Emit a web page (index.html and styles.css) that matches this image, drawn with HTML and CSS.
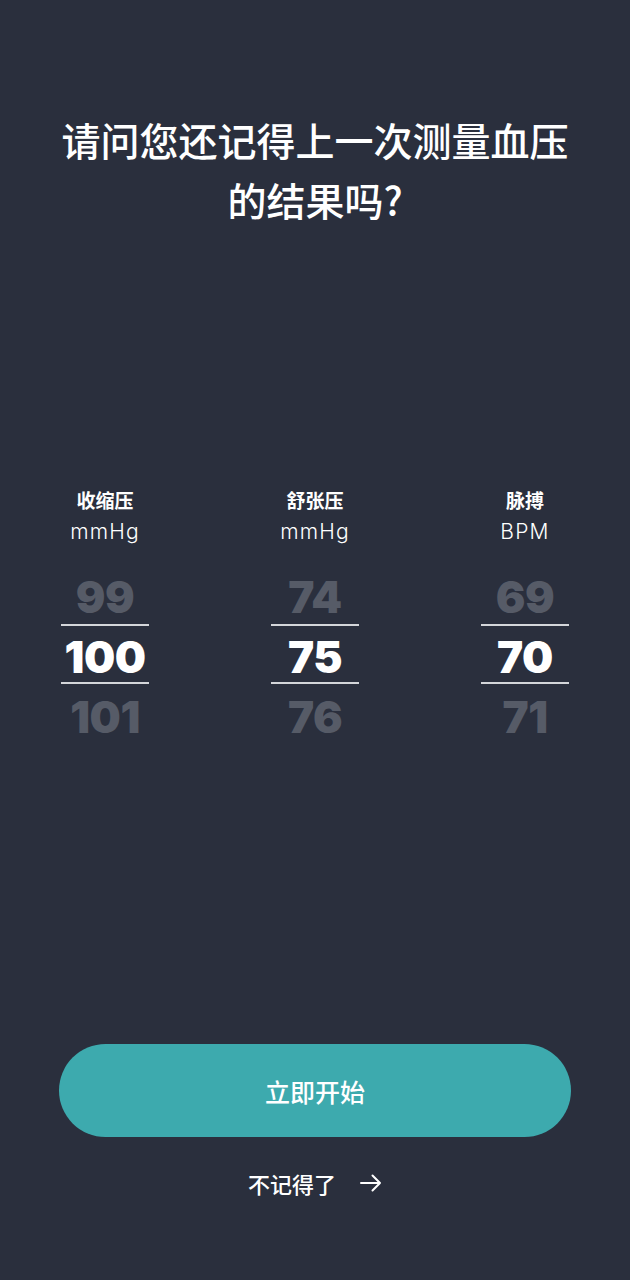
FILE: index.html
```html
<!DOCTYPE html>
<html lang="zh">

<head>
    <meta charset="UTF-8">
    <meta name="viewport" content="width=device-width, initial-scale=1.0">
    <title>血压记录</title>
    <link rel="stylesheet" href="styles.css">
</head>

<body class="main">
    <h1 class="title">请问您还记得上一次测量血压<br>的结果吗?</h1>

    <div class="pickers">
        <div class="column">
            <div class="label">收缩压</div>
            <div class="unit">mmHg</div>
            <div class="wheel">
                <div class="num dim">99</div>
                <div class="num active">100</div>
                <div class="num dim">101</div>
            </div>
        </div>
        <div class="column">
            <div class="label">舒张压</div>
            <div class="unit">mmHg</div>
            <div class="wheel">
                <div class="num dim">74</div>
                <div class="num active">75</div>
                <div class="num dim">76</div>
            </div>
        </div>
        <div class="column">
            <div class="label">脉搏</div>
            <div class="unit">BPM</div>
            <div class="wheel">
                <div class="num dim">69</div>
                <div class="num active">70</div>
                <div class="num dim">71</div>
            </div>
        </div>
    </div>

    <div class="actions">
        <button class="start-btn">立即开始</button>
        <a class="skip">不记得了
            <svg class="arrow" width="22" height="18" viewBox="0 0 22 18">
                <path d="M1 9 H20 M12.5 1.5 L20 9 L12.5 16.5" fill="none" stroke="#fff" stroke-width="2"
                    stroke-linecap="round" stroke-linejoin="round" />
            </svg>
        </a>
    </div>
</body>

</html>
```

FILE: styles.css
```css
html,
body {
    margin: 0;
    height: 100%;
}

.main {
    background-color: #2a2f3d;
    color: #fff;
    font-family: "Noto Sans CJK SC", "Noto Sans", sans-serif;
    display: flex;
    flex-direction: column;
    align-items: center;
}

.title {
    margin: 109px 0 0;
    font-size: 39px;
    line-height: 60px;
    font-weight: 500;
    text-align: center;
}

/* three pickers side by side */
.pickers {
    margin-top: 257px;
    width: 100%;
    display: grid;
    grid-template-columns: repeat(3, 1fr);
}

.column {
    display: flex;
    flex-direction: column;
    align-items: center;
}

.label {
    font-size: 19px;
    line-height: 28px;
    font-weight: 700;
}

.unit {
    margin-top: 3px;
    font-family: "Inter", "Noto Sans", sans-serif;
    font-weight: 300;
    font-size: 21px;
    line-height: 30px;
    letter-spacing: 1.2px;
}

.wheel {
    margin-top: 17px;
    width: 88px;
    display: flex;
    flex-direction: column;
    align-items: center;
}

.num {
    width: 100%;
    height: 60px;
    box-sizing: border-box;
    padding-top: 6px;
    line-height: 54px;
    text-align: center;
    font-family: "Inter", "Noto Sans", sans-serif;
    font-weight: 900;
    font-size: 44px;
    letter-spacing: -0.5px;
}

.num.dim {
    color: #565b67;
}

.num.active {
    color: #fff;
    border-top: 2px solid #d4d6da;
    border-bottom: 2px solid #d4d6da;
    line-height: 50px;
}

.actions {
    margin-top: auto;
    margin-bottom: 81px;
    display: flex;
    flex-direction: column;
    align-items: center;
}

.start-btn {
    width: 512px;
    height: 93px;
    border: none;
    border-radius: 47px;
    background-color: #3daaae;
    color: #fff;
    font-family: "Noto Sans CJK SC", sans-serif;
    font-size: 25px;
    font-weight: 500;
    cursor: pointer;
}

.skip {
    margin-top: 30px;
    display: flex;
    align-items: center;
    gap: 24px;
    font-size: 22px;
    font-weight: 500;
    color: #fff;
}

.arrow {
    display: block;
}
```
